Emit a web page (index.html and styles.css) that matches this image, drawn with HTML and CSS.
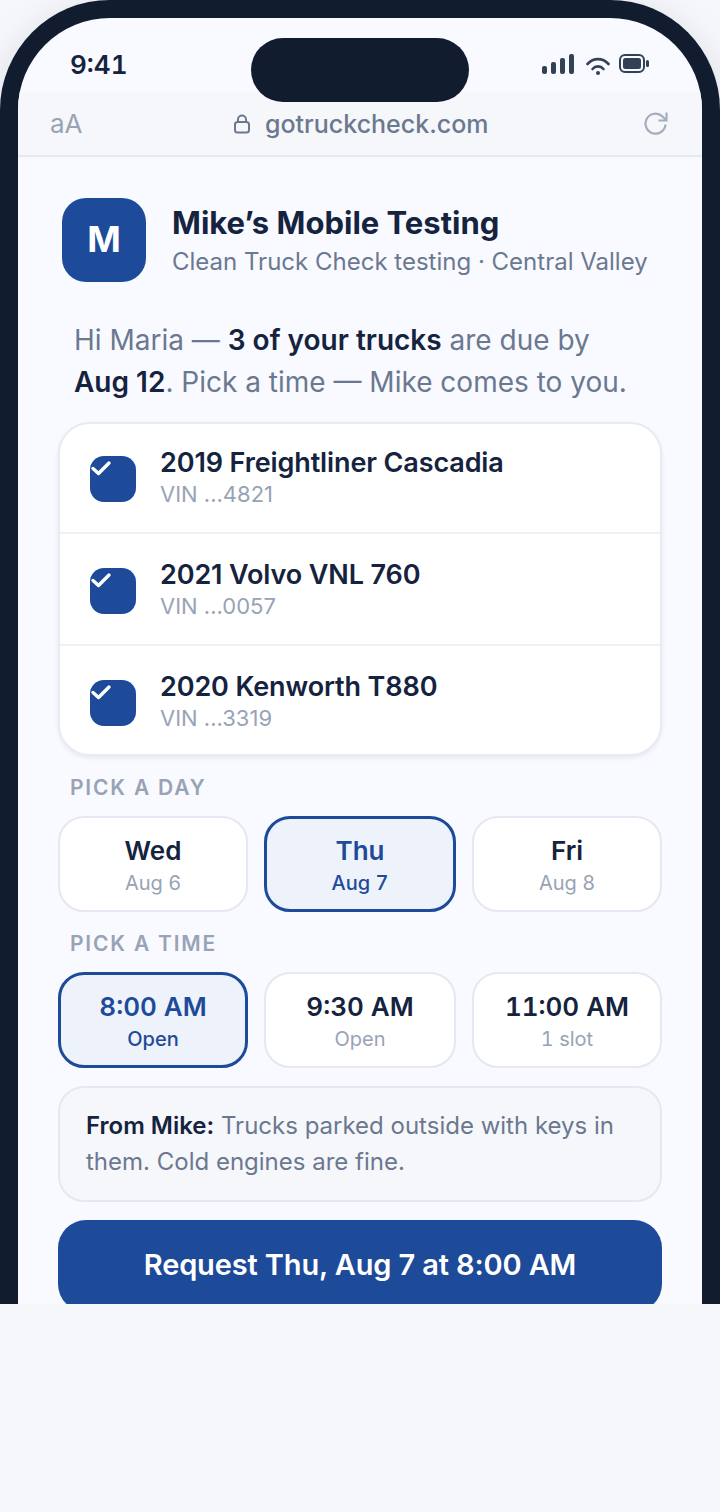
FILE: index.html
```html
<!DOCTYPE html>
<html lang="en">
<head>
  <meta charset="UTF-8" />
  <meta name="viewport" content="width=device-width, initial-scale=1.0"/>
  <title>Mike's Mobile Testing</title>
  <link rel="stylesheet" href="styles.css">
</head>
<body>
  <div class="stage">
    <div class="phone">
      <div class="island"></div>

      <div class="status">
        <span class="clock">9:41</span>
        <div class="status-icons">
          <svg width="32" height="20" viewBox="0 0 32 20" fill="#334155">
            <rect x="0" y="12" width="5" height="8" rx="2"/>
            <rect x="9" y="8" width="5" height="12" rx="2"/>
            <rect x="18" y="4" width="5" height="16" rx="2"/>
            <rect x="27" y="0" width="5" height="20" rx="2"/>
          </svg>
          <svg class="wifi" width="24" height="22" viewBox="0 0 24 22" fill="none" stroke="#334155" stroke-width="2.600" stroke-linecap="round">
            <path d="M1.500 10C7.500 3.500 16.500 3.500 22.500 10"/>
            <path d="M6.500 15C9.500 11.500 14.500 11.500 17.500 15"/>
            <circle cx="12" cy="19" r="2" fill="#334155" stroke="none"/>
          </svg>
          <svg width="30" height="20" viewBox="0 0 30 20" fill="none">
            <rect x="1" y="1" width="24" height="17" rx="5" stroke="#334155" stroke-width="2"/>
            <rect x="4" y="4" width="18" height="11" rx="2.500" fill="#334155"/>
            <rect x="27" y="6" width="3" height="7" rx="1.500" fill="#334155"/>
          </svg>
        </div>
      </div>

      <div class="urlbar">
        <span class="aa">aA</span>
        <div class="address">
          <svg width="16" height="20" viewBox="0 0 16 20" fill="none" stroke="#6b7890" stroke-width="2">
            <rect x="1" y="8" width="14" height="10.500" rx="2.500"/>
            <path d="M4 8V5.500a4 4 0 0 1 8 0V8"/>
          </svg>
          <span>gotruckcheck.com</span>
        </div>
        <svg class="reload" width="26" height="26" viewBox="0 0 26 26" fill="none" stroke="#a3adbd" stroke-width="2.200">
          <path d="M22.500 13.500A10 10 0 1 1 19.500 5.500L23 9"/>
          <path d="M23.500 1.500V9.500H15.500"/>
        </svg>
      </div>

      <div class="content">
        <div class="shop">
          <div class="avatar">M</div>
          <div>
            <div class="shop-name">Mike’s Mobile Testing</div>
            <div class="shop-sub">Clean Truck Check testing · Central Valley</div>
          </div>
        </div>

        <p class="intro">Hi Maria — <b>3 of your trucks</b> are due by <b>Aug 12</b>. Pick a time — Mike comes to you.</p>

        <div class="trucks">
          <div class="truck">
            <div class="check">
              <svg width="24" height="20" viewBox="0 0 24 20" fill="none" stroke="#fff" stroke-width="3.400" stroke-linecap="round" stroke-linejoin="round"><path d="M3 10.500L8.500 15.500L19 5"/></svg>
            </div>
            <div>
              <div class="truck-name">2019 Freightliner Cascadia</div>
              <div class="vin">VIN ...4821</div>
            </div>
          </div>
          <div class="truck">
            <div class="check">
              <svg width="24" height="20" viewBox="0 0 24 20" fill="none" stroke="#fff" stroke-width="3.400" stroke-linecap="round" stroke-linejoin="round"><path d="M3 10.500L8.500 15.500L19 5"/></svg>
            </div>
            <div>
              <div class="truck-name">2021 Volvo VNL 760</div>
              <div class="vin">VIN ...0057</div>
            </div>
          </div>
          <div class="truck">
            <div class="check">
              <svg width="24" height="20" viewBox="0 0 24 20" fill="none" stroke="#fff" stroke-width="3.400" stroke-linecap="round" stroke-linejoin="round"><path d="M3 10.500L8.500 15.500L19 5"/></svg>
            </div>
            <div>
              <div class="truck-name">2020 Kenworth T880</div>
              <div class="vin">VIN ...3319</div>
            </div>
          </div>
        </div>

        <div class="label">PICK A DAY</div>
        <div class="picker">
          <div class="option"><div class="main">Wed</div><div class="sub">Aug 6</div></div>
          <div class="option selected"><div class="main">Thu</div><div class="sub">Aug 7</div></div>
          <div class="option"><div class="main">Fri</div><div class="sub">Aug 8</div></div>
        </div>

        <div class="label">PICK A TIME</div>
        <div class="picker">
          <div class="option selected"><div class="main">8:00 AM</div><div class="sub">Open</div></div>
          <div class="option"><div class="main">9:30 AM</div><div class="sub">Open</div></div>
          <div class="option"><div class="main">11:00 AM</div><div class="sub">1 slot</div></div>
        </div>

        <div class="note"><b>From Mike:</b> Trucks parked outside with keys in them. Cold engines are fine.</div>

        <button class="request">Request Thu, Aug 7 at 8:00 AM</button>
      </div>
    </div>
  </div>
</body>
</html>
```

FILE: styles.css
```css
* {
  box-sizing: border-box;
}

html, body {
  margin: 0;
  height: 1512px;
}

body {
  background-color: #f5f7fa;
  font-family: Inter, sans-serif;
  color: #15233e;
  overflow: hidden;
}

.stage {
  height: 1304px;
  overflow: hidden;
}

.phone {
  position: relative;
  width: 720px;
  height: 1304px;
  background-color: #f8faff;
  border: 18px solid #111c2e;
  border-bottom: none;
  border-radius: 110px 110px 0 0;
  overflow: hidden;
  box-shadow: 0 10px 40px rgba(17, 28, 46, 0.12);
}

.island {
  position: absolute;
  top: 20px;
  left: 233px;
  width: 218px;
  height: 64px;
  background-color: #111c2e;
  border-radius: 32px;
  z-index: 2;
}

.status {
  height: 74px;
  padding: 0 52px;
  display: flex;
  justify-content: space-between;
  align-items: flex-start;
}

.clock {
  margin-top: 30px;
  font-size: 26px;
  line-height: 34px;
  font-weight: 600;
  font-variant-numeric: tabular-nums;
}

.status-icons {
  margin-top: 36px;
  margin-right: 1px;
  display: flex;
  gap: 9px;
  align-items: flex-start;
}

.wifi {
  margin-left: 3px;
}

.urlbar {
  height: 65px;
  padding: 0 32px;
  background-color: #f5f7fa;
  border-bottom: 2px solid #e5e8f0;
  display: flex;
  align-items: center;
  justify-content: space-between;
}

.aa {
  font-size: 26px;
  color: #98a3b6;
}

.address {
  margin-left: -3px;
  display: flex;
  align-items: center;
  gap: 15px;
  font-size: 25px;
  font-weight: 500;
  color: #6b7890;
}

.reload {
  margin-right: 1px;
}

.content {
  padding: 41px 40px 0;
}

.shop {
  padding-left: 4px;
  display: flex;
  align-items: center;
  gap: 26px;
}

.avatar {
  width: 84px;
  height: 84px;
  padding-bottom: 3px;
  background-color: #1e4a9a;
  color: #fff;
  border-radius: 24px;
  font-size: 36px;
  font-weight: 700;
  display: flex;
  align-items: center;
  justify-content: center;
}

.shop-name {
  margin-top: 2px;
  font-size: 31px;
  line-height: 38px;
  font-weight: 700;
}

.shop-sub {
  margin-top: 4px;
  font-size: 24px;
  line-height: 32px;
  color: #6b7890;
}

.intro {
  margin: 37px 16px 19px;
  font-size: 28px;
  line-height: 42px;
  color: #6b7890;
}

.intro b {
  color: #15233e;
  font-weight: 600;
}

.trucks {
  background-color: #fff;
  border: 2px solid #e8ebf3;
  border-radius: 32px;
  box-shadow: 0 2px 4px rgba(17, 28, 46, 0.08);
}

.truck {
  height: 112px;
  padding: 24px 30px 0;
  display: flex;
  align-items: flex-start;
  gap: 24px;
  border-bottom: 2px solid #eef0f6;
}

.truck:first-child {
  height: 110px;
  padding-top: 22px;
}

.truck:last-child {
  height: 108px;
  border-bottom: none;
}

.check {
  position: relative;
  width: 46px;
  height: 46px;
  margin-top: 10px;
  background-color: #1e4a9a;
  border-radius: 14px;
  flex-shrink: 0;
}

.check svg {
  position: absolute;
  top: 2px;
  left: 0;
}

.truck-name {
  font-size: 27px;
  line-height: 34px;
  font-weight: 600;
  letter-spacing: -0.12px;
}

.vin {
  font-size: 22px;
  line-height: 28px;
  color: #98a3b6;
}

.label {
  margin: 19px 12px 15px;
  font-size: 21px;
  line-height: 26px;
  font-weight: 600;
  letter-spacing: 1.8px;
  color: #98a3b6;
}

.picker {
  display: grid;
  grid-template-columns: 190px 192px 190px;
  gap: 16px;
}

.option {
  height: 96px;
  background-color: #fff;
  border: 2px solid #e5e8f0;
  border-radius: 26px;
  text-align: center;
  padding-top: 16px;
}

.option .main {
  font-size: 26px;
  line-height: 34px;
  font-weight: 600;
  font-variant-numeric: tabular-nums;
}

.option .sub {
  font-size: 20px;
  line-height: 30px;
  color: #98a3b6;
  font-variant-numeric: tabular-nums;
}

.option.selected {
  background-color: #eef2fb;
  border: 3px solid #1e4a9a;
  padding-top: 15px;
}

.option.selected .main {
  color: #1e4a9a;
}

.option.selected .sub {
  color: #1e4a9a;
  font-weight: 500;
}

.note {
  margin-top: 18px;
  height: 116px;
  padding: 20px 26px;
  background-color: #f5f7fa;
  border: 2px solid #e5e8f0;
  border-radius: 26px;
  font-size: 24px;
  line-height: 36px;
  color: #6b7890;
}

.note b {
  color: #15233e;
  font-weight: 600;
}

.request {
  display: block;
  width: 100%;
  height: 92px;
  margin-top: 18px;
  padding-bottom: 4px;
  background-color: #1e4a9a;
  color: #fff;
  border: none;
  border-radius: 28px;
  font-family: Inter, sans-serif;
  font-size: 29px;
  font-weight: 600;
  letter-spacing: -0.14px;
}
```
